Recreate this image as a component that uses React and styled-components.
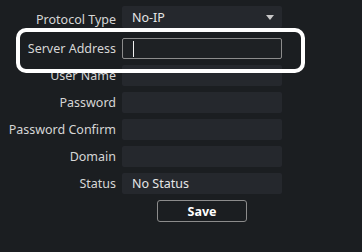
import React from 'react';
import styled, { createGlobalStyle } from 'styled-components';

const Global = createGlobalStyle`
    html, body {
        margin: 0;
        padding: 0;
        background: #1b1e21;
    }
    body {
        font-family: "Noto Sans", "Open Sans", sans-serif;
        width: 362px;
        height: 252px;
        overflow: hidden;
    }
`;

const Page = styled.div`
    position: relative;
    width: 362px;
    height: 252px;
    padding-top: 6px;
    box-sizing: border-box;
`;

const Form = styled.div`
    display: grid;
    grid-template-columns: 116px 160px;
    column-gap: 6px;
    row-gap: 6px;
    align-items: center;
`;

const Label = styled.div`
    text-align: right;
    color: #d6d6d6;
    font-size: 12.5px;
    white-space: nowrap;
`;

const Field = styled.div`
    box-sizing: border-box;
    height: ${(p) => (p.$tall ? '22px' : '21px')};
    background: #25282d;
    border-radius: 2px;
    color: #e6e6e6;
    font-size: 12.5px;
    line-height: 21px;
    padding-left: 10px;
    padding-right: 8px;
    display: flex;
    align-items: center;
    justify-content: space-between;
    margin-bottom: ${(p) => (p.$tall ? '4px' : '0')};
`;

const Input = styled.div`
    box-sizing: border-box;
    height: 21px;
    border: 1px solid #8c8c8c;
    border-radius: 2px;
    background: #1e2124;
    display: flex;
    align-items: center;
    padding-left: 10px;
`;

const Caret = styled.span`
    display: block;
    width: 1px;
    height: 16px;
    background: #f0f0f0;
`;

const Arrow = styled.span`
    width: 0;
    height: 0;
    border-left: 4px solid transparent;
    border-right: 4px solid transparent;
    border-top: 5px solid #c8c8c8;
`;

const Actions = styled.div`
    grid-column: 2;
    display: flex;
    padding-left: 35px;
`;

const SaveButton = styled.button`
    width: 90px;
    height: 22px;
    box-sizing: border-box;
    border: 1px solid #8c8c8c;
    border-radius: 3px;
    background: transparent;
    color: #ffffff;
    font-family: "Noto Sans", sans-serif;
    font-weight: bold;
    font-size: 12.5px;
    padding: 0;
`;

const Highlight = styled.div`
    position: absolute;
    left: 16px;
    top: 28px;
    width: 289px;
    height: 45px;
    box-sizing: border-box;
    border: 4px solid #ffffff;
    border-radius: 10px;
    pointer-events: none;
`;

const rows = [
    { label: 'User Name' },
    { label: 'Password' },
    { label: 'Password Confirm' },
    { label: 'Domain' },
    { label: 'Status', value: 'No Status' },
];

const App = () => {
    return (
        <Page>
            <Global />
            <Form>
                <Label>Protocol Type</Label>
                <Field $tall>
                    No-IP
                    <Arrow />
                </Field>
                <Label>Server Address</Label>
                <Input>
                    <Caret />
                </Input>
                {rows.map((row) => (
                    <React.Fragment key={row.label}>
                        <Label>{row.label}</Label>
                        <Field>{row.value}</Field>
                    </React.Fragment>
                ))}
                <Actions>
                    <SaveButton>Save</SaveButton>
                </Actions>
            </Form>
            <Highlight />
        </Page>
    );
};

export default App;
